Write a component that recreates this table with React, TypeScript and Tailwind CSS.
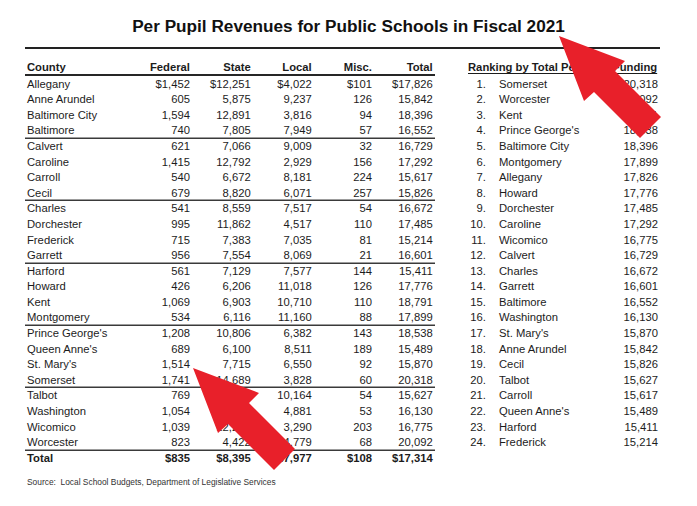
import React from "react";

type Row = [string, string, string, string, string, string, boolean?];

const rows: Row[] = [
  ["Allegany", "$1,452", "$12,251", "$4,022", "$101", "$17,826"],
  ["Anne Arundel", "605", "5,875", "9,237", "126", "15,842"],
  ["Baltimore City", "1,594", "12,891", "3,816", "94", "18,396"],
  ["Baltimore", "740", "7,805", "7,949", "57", "16,552", true],
  ["Calvert", "621", "7,066", "9,009", "32", "16,729"],
  ["Caroline", "1,415", "12,792", "2,929", "156", "17,292"],
  ["Carroll", "540", "6,672", "8,181", "224", "15,617"],
  ["Cecil", "679", "8,820", "6,071", "257", "15,826", true],
  ["Charles", "541", "8,559", "7,517", "54", "16,672"],
  ["Dorchester", "995", "11,862", "4,517", "110", "17,485"],
  ["Frederick", "715", "7,383", "7,035", "81", "15,214"],
  ["Garrett", "956", "7,554", "8,069", "21", "16,601", true],
  ["Harford", "561", "7,129", "7,577", "144", "15,411"],
  ["Howard", "426", "6,206", "11,018", "126", "17,776"],
  ["Kent", "1,069", "6,903", "10,710", "110", "18,791"],
  ["Montgomery", "534", "6,116", "11,160", "88", "17,899", true],
  ["Prince George's", "1,208", "10,806", "6,382", "143", "18,538"],
  ["Queen Anne's", "689", "6,100", "8,511", "189", "15,489"],
  ["St. Mary's", "1,514", "7,715", "6,550", "92", "15,870"],
  ["Somerset", "1,741", "14,689", "3,828", "60", "20,318", true],
  ["Talbot", "769", "4,640", "10,164", "54", "15,627"],
  ["Washington", "1,054", "10,142", "4,881", "53", "16,130"],
  ["Wicomico", "1,039", "12,243", "3,290", "203", "16,775"],
  ["Worcester", "823", "4,422", "14,779", "68", "20,092", true],
];

const ranking: [string, string][] = [
  ["Somerset", "20,318"],
  ["Worcester", "20,092"],
  ["Kent", "18,791"],
  ["Prince George's", "18,538"],
  ["Baltimore City", "18,396"],
  ["Montgomery", "17,899"],
  ["Allegany", "17,826"],
  ["Howard", "17,776"],
  ["Dorchester", "17,485"],
  ["Caroline", "17,292"],
  ["Wicomico", "16,775"],
  ["Calvert", "16,729"],
  ["Charles", "16,672"],
  ["Garrett", "16,601"],
  ["Baltimore", "16,552"],
  ["Washington", "16,130"],
  ["St. Mary's", "15,870"],
  ["Anne Arundel", "15,842"],
  ["Cecil", "15,826"],
  ["Talbot", "15,627"],
  ["Carroll", "15,617"],
  ["Queen Anne's", "15,489"],
  ["Harford", "15,411"],
  ["Frederick", "15,214"],
];

const arrowPts = "0,0 66,25 56,35 102,81 81,102 35,56 25,65";

export default function App() {
  return (
    <div className="relative w-[697px] h-[506px] bg-white text-[#1c1c1c] font-['Liberation_Sans',Arial,sans-serif] overflow-hidden">
      <div className="pt-[16px]">
        <h1 className="text-center text-[17.2px] leading-[20px] font-bold text-[#111]">
          Per Pupil Revenues for Public Schools in Fiscal 2021
        </h1>
        <div className="mt-[10.7px] ml-[25px] w-[635px] h-[2px] bg-[#222]" />
        <div className="flex mt-[10.3px]">
          <div className="ml-[25px] w-[410px] text-[11.25px]">
            <div className="grid grid-cols-[105px_58px_60.7px_61px_60.3px_60.7px] pl-[2px] pr-[2.3px] h-[16.6px] leading-[16.6px] font-bold shadow-[inset_0_-2px_0_#262626]">
              <div>County</div>
              <div className="text-right">Federal</div>
              <div className="text-right">State</div>
              <div className="text-right">Local</div>
              <div className="text-right">Misc.</div>
              <div className="text-right">Total</div>
            </div>
            <div className="mt-[1px]">
              {rows.map((r) => (
                <div
                  key={r[0]}
                  className={
                    r[6]
                      ? "grid grid-cols-[105px_58px_60.7px_61px_60.3px_60.7px] pl-[2px] pr-[2.3px] h-[15.6px] leading-[15.6px] shadow-[inset_0_-1.6px_0_#3a3a3a]"
                      : "grid grid-cols-[105px_58px_60.7px_61px_60.3px_60.7px] pl-[2px] pr-[2.3px] h-[15.6px] leading-[15.6px]"
                  }
                >
                  <div className="whitespace-nowrap">{r[0]}</div>
                  <div className="text-right">{r[1]}</div>
                  <div className="text-right">{r[2]}</div>
                  <div className="text-right">{r[3]}</div>
                  <div className="text-right">{r[4]}</div>
                  <div className="text-right">{r[5]}</div>
                </div>
              ))}
              <div className="grid grid-cols-[105px_58px_60.7px_61px_60.3px_60.7px] pl-[2px] pr-[2.3px] h-[15.6px] leading-[15.6px] font-bold">
                <div>Total</div>
                <div className="text-right">$835</div>
                <div className="text-right">$8,395</div>
                <div className="text-right">$7,977</div>
                <div className="text-right">$108</div>
                <div className="text-right">$17,314</div>
              </div>
            </div>
          </div>
          <div className="ml-[33px] w-[190px] text-[11.25px]">
            <div className="h-[16.6px] leading-[16.6px] font-bold underline decoration-[1.2px] underline-offset-[1.5px] whitespace-nowrap">
              Ranking by Total Per Pupil Funding
            </div>
            <div className="mt-[1px]">
              {ranking.map(([name, val], i) => (
                <div key={name} className="flex h-[15.6px] leading-[15.6px]">
                  <div className="w-[18px] text-right">{i + 1}.</div>
                  <div className="ml-[13px] flex-1">{name}</div>
                  <div className="text-right">{val}</div>
                </div>
              ))}
            </div>
          </div>
        </div>
        <div className="mt-[11px] ml-[27px] text-[8.4px] leading-[10px] text-[#333]">
          Source:&nbsp; Local School Budgets, Department of Legislative Services
        </div>
      </div>
      <svg className="absolute inset-0 pointer-events-none" width="697" height="506" viewBox="0 0 697 506">
        <polygon points={arrowPts} transform="translate(559 36)" fill="#e8202a" />
        <polygon points={arrowPts} transform="translate(193 368)" fill="#e8202a" />
      </svg>
    </div>
  );
}
